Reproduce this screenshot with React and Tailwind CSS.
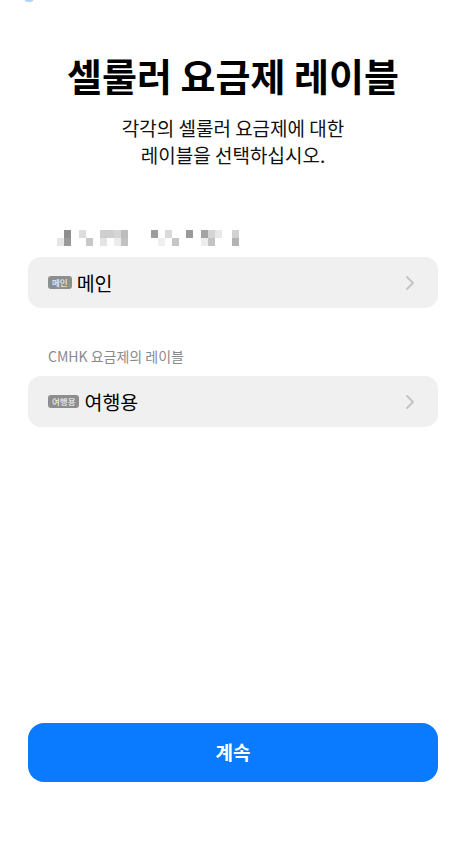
import { ChevronRight } from 'lucide-react';

const font = { fontFamily: '"Noto Sans CJK KR", "Noto Sans", sans-serif' };

// pixelated redaction row: [x, row, color]
const cells = [
  [0, 1, '#e6e6e6'], [7, 0, '#8f8f8f'], [7, 1, '#9a9a9a'],
  [22, 0, '#dcdcdc'], [29, 1, '#c8c8c8'],
  [43, 0, '#cfcfcf'], [50, 0, '#cfcfcf'], [57, 0, '#d6d6d6'], [64, 0, '#bdbdbd'],
  [43, 1, '#e4e4e4'], [57, 1, '#ececec'], [64, 1, '#c2c2c2'],
  [94, 0, '#9d9d9d'], [108, 0, '#dadada'], [115, 1, '#c6c6c6'], [101, 1, '#efefef'],
  [129, 0, '#9a9a9a'], [144, 0, '#a3a3a3'], [151, 0, '#d5d5d5'], [158, 0, '#e8e8e8'],
  [151, 1, '#c4c4c4'], [144, 1, '#ededed'],
  [175, 0, '#d2d2d2'], [175, 1, '#b3b3b3'],
];

function Redacted() {
  return (
    <svg width="190" height="18" viewBox="0 0 190 18" className="block">
      <defs>
        <filter id="soft">
          <feGaussianBlur stdDeviation="0.6" />
        </filter>
      </defs>
      <g filter="url(#soft)">
        {cells.map(([x, row, c], i) => (
          <rect key={i} x={x} y={1 + row * 8} width="7" height="8" fill={c} />
        ))}
      </g>
    </svg>
  );
}

function Row({ badge, label }) {
  return (
    <div className="flex h-[51px] items-center rounded-[13px] bg-[#f0f0f0] pl-[20px] pr-[16px]">
      <span className="mr-[5px] flex h-[13px] items-center rounded-[3px] bg-[#8e8e8e] px-[4px] text-[8.5px] leading-none text-white">
        {badge}
      </span>
      <span className="flex-1 text-[19.5px] text-black">{label}</span>
      <ChevronRight size={24} strokeWidth={1.8} className="text-[#c3c3c6]" />
    </div>
  );
}

export default function App() {
  return (
    <div className="relative flex min-h-[851px] w-[466px] flex-col bg-white" style={font}>
      <div className="absolute left-[24px] top-[-6px] h-[8px] w-[10px] rounded-sm bg-[#7fb3ee] opacity-60" />

      <h1 className="mt-[47px] text-center text-[38px] font-bold leading-[56px] tracking-[0px] text-black">
        셀룰러 요금제 레이블
      </h1>
      <p className="mt-[11px] text-center text-[19px] leading-[27px] text-[#111]">
        각각의 셀룰러 요금제에 대한
        <br />
        레이블을 선택하십시오.
      </p>

      <div className="mt-[61px] px-[28px]">
        <div className="pl-[29px]">
          <Redacted />
        </div>
        <div className="mt-[10px]">
          <Row badge="메인" label="메인" />
        </div>

        <p className="mt-[38px] pl-[20px] text-[14px] leading-[20px] text-[#8a8a8e]">CMHK 요금제의 레이블</p>
        <div className="mt-[10px]">
          <Row badge="여행용" label="여행용" />
        </div>
      </div>

      <div className="mt-auto px-[28px] pb-[69px]">
        <button className="flex h-[59px] w-full items-center justify-center rounded-[16px] bg-[#0a7bff] text-[19px] font-bold text-white">
          계속
        </button>
      </div>
    </div>
  );
}
